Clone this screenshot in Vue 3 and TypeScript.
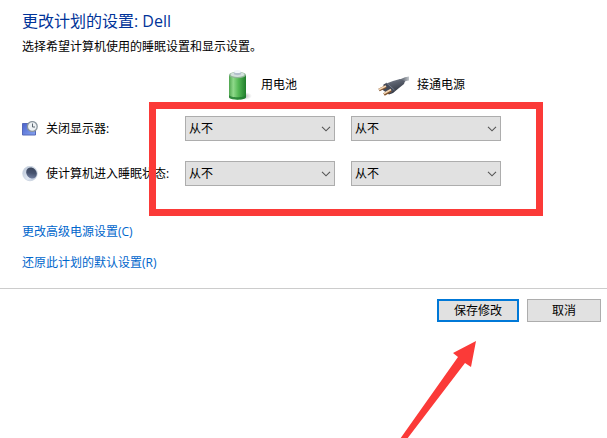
<script setup lang="ts">
import { ref } from 'vue'

interface PowerSetting {
  id: string
  label: string
}

const settings: PowerSetting[] = [
  { id: 'display', label: '关闭显示器:' },
  { id: 'sleep', label: '使计算机进入睡眠状态:' },
]
const sources = ['battery', 'mains']
const options = ['1 分钟', '5 分钟', '15 分钟', '从不']

const chosen = ref<Record<string, string>>({
  'display-battery': '从不',
  'display-mains': '从不',
  'sleep-battery': '从不',
  'sleep-mains': '从不',
})
</script>

<template>
  <main class="page">
    <section class="content">
      <h1 class="title">更改计划的设置: Dell</h1>
      <p class="intro">选择希望计算机使用的睡眠设置和显示设置。</p>

      <div class="settings">
        <div class="source source-battery">
          <svg class="source-icon" viewBox="0 0 32 32" aria-hidden="true">
            <defs>
              <linearGradient id="cell" x1="0" x2="1" y1="0" y2="0">
                <stop offset="0" stop-color="#4fa54f" />
                <stop offset="0.25" stop-color="#8fd98a" />
                <stop offset="0.55" stop-color="#55b956" />
                <stop offset="1" stop-color="#1f7d2b" />
              </linearGradient>
              <radialGradient id="shade">
                <stop offset="0" stop-color="#777" stop-opacity="0.6" />
                <stop offset="1" stop-color="#999" stop-opacity="0" />
              </radialGradient>
            </defs>
            <ellipse cx="23" cy="27" rx="8" ry="4" fill="url(#shade)" />
            <path d="M8 6v22c0 3.500 17 3.500 17 0V6z" fill="url(#cell)" />
            <path d="M8 26c1 3 16 3 17 0v2c0 3.500-17 3.500-17 0z" fill="#1f7a2f" fill-opacity="0.8" />
            <ellipse cx="16.500" cy="6" rx="8.500" ry="3.200" fill="#8fb596" />
            <ellipse cx="16.500" cy="5.500" rx="7" ry="2.500" fill="#d3e0dc" />
            <path d="M13 2.500v2.500c0 1.500 7 1.500 7 0V2.500z" fill="#b3bfcc" />
            <ellipse cx="16.500" cy="2.500" rx="3.500" ry="1.500" fill="#f2f6fa" />
          </svg>
          <span>用电池</span>
        </div>
        <div class="source source-mains">
          <svg class="source-icon" viewBox="0 0 32 32" aria-hidden="true">
            <defs>
              <linearGradient id="plug" x1="0" x2="0.4" y1="0" y2="1">
                <stop offset="0" stop-color="#8d939f" />
                <stop offset="0.4" stop-color="#5b616e" />
                <stop offset="1" stop-color="#2e333e" />
              </linearGradient>
              <linearGradient id="cord" gradientUnits="userSpaceOnUse" x1="20" x2="32" y1="0" y2="0">
                <stop offset="0" stop-color="#4c525e" />
                <stop offset="0.6" stop-color="#7e848d" />
                <stop offset="1" stop-color="#c4c8cd" />
              </linearGradient>
            </defs>
            <path d="M20 14c5-1 6-4.500 12-4.500" fill="none" stroke="url(#cord)" stroke-width="4" />
            <path d="M8 15l8-3 7-2 5 2-1 3-5 4-6 5-4 1.500-7-5z" fill="url(#plug)" />
            <path d="M6.500 15.500l3-1.500 8 7-4 4c-4-1-8-4-7-9.500z" fill="#454b59" />
            <path d="M9.500 14l8 7" stroke="#7f8695" stroke-width="0.800" />
            <path d="M9 17.500l-7 3.500M14 21.500l-7 4" stroke="#85562d" stroke-width="3" />
            <path d="M9 17l-7 3.500M14 20.500l-7 4" stroke="#f2d5b4" stroke-width="1.800" />
          </svg>
          <span>接通电源</span>
        </div>

        <template v-for="setting in settings" :key="setting.id">
          <div class="setting-name">
            <svg v-if="setting.id === 'display'" class="row-icon" viewBox="0 0 16 16" aria-hidden="true">
              <defs>
                <linearGradient id="screen" x1="0" x2="1" y1="0" y2="1">
                  <stop offset="0" stop-color="#4a62cc" />
                  <stop offset="1" stop-color="#86a4f0" />
                </linearGradient>
              </defs>
              <path d="M.5 2.500h13v11.500H.5z" fill="url(#screen)" stroke="#5568b8" />
              <circle cx="10.300" cy="5.500" r="4.900" fill="#edf1f4" stroke="#8b969e" stroke-width="1.300" />
              <path d="M10.500 2.500v3.500h2.500" fill="none" stroke="#5c6872" />
            </svg>
            <svg v-else class="row-icon" viewBox="0 0 16 16" aria-hidden="true">
              <defs>
                <linearGradient id="moon" x1="0" x2="1" y1="0" y2="1">
                  <stop offset="0" stop-color="#b8c3d4" />
                  <stop offset="0.6" stop-color="#dfe7f2" />
                  <stop offset="1" stop-color="#aab6cf" />
                </linearGradient>
                <linearGradient id="night" x1="0" x2="1" y1="0" y2="1">
                  <stop offset="0" stop-color="#3a4358" />
                  <stop offset="0.5" stop-color="#46536f" />
                  <stop offset="1" stop-color="#8592b4" />
                </linearGradient>
              </defs>
              <circle cx="8" cy="7.500" r="7.300" fill="url(#moon)" stroke="#c6d0dc" stroke-width="0.700" />
              <ellipse cx="9.500" cy="7" rx="5.800" ry="5" transform="rotate(50 9.500 7)" fill="url(#night)" />
            </svg>
            <label :for="`${setting.id}-battery`">{{ setting.label }}</label>
          </div>
          <div v-for="source in sources" :key="source" class="picker">
            <select
              :id="`${setting.id}-${source}`"
              v-model="chosen[`${setting.id}-${source}`]"
              :aria-label="setting.label"
            >
              <option v-for="option in options" :key="option">{{ option }}</option>
            </select>
            <svg class="chevron" viewBox="0 0 10 6" aria-hidden="true">
              <path d="M1 .8l4 4 4-4" fill="none" stroke="#555" stroke-width="1.100" />
            </svg>
          </div>
        </template>
        <div class="highlight"></div>
      </div>

      <nav class="links">
        <a href="#advanced">更改高级电源设置(C)</a>
        <a href="#restore">还原此计划的默认设置(R)</a>
      </nav>
    </section>

    <footer class="actions">
      <button type="button" class="button primary">保存修改</button>
      <button type="button" class="button">取消</button>
      <svg class="arrow" viewBox="0 0 76 98" aria-hidden="true">
        <path d="M76 0L53 12l5 4L0 98h7L65 22l6 4z" fill="#fb3a38" />
      </svg>
    </footer>
  </main>
</template>

<style>
body {
  margin: 0;
  background: #fff;
}
</style>

<style scoped>
.page {
  font-family: "Open Sans", "Noto Sans CJK SC", sans-serif;
  font-size: 12px;
  line-height: 16px;
  color: #000;
}

.content {
  padding: 10px 22px 17px;
}

.title {
  margin: 0;
  font-size: 16px;
  font-weight: 400;
  line-height: 22px;
  color: #003399;
}

.intro {
  margin: 7px 0 14px;
}

.settings {
  position: relative;
  display: grid;
  grid-template-columns: 147px 150px 150px;
  column-gap: 16px;
  row-gap: 20px;
  white-space: nowrap;
}

.source {
  display: flex;
  align-items: center;
  gap: 8px;
  height: 32px;
  margin-bottom: -5px;
}

.source-battery {
  grid-column: 2;
  padding-left: 36px;
}

.source-mains {
  padding-left: 26px;
}

.source-icon {
  flex: none;
  width: 32px;
  height: 32px;
}

.setting-name {
  display: flex;
  align-items: center;
  gap: 8px;
}

.row-icon {
  flex: none;
  width: 16px;
  height: 16px;
}

.picker {
  display: grid;
  align-items: center;
}

.picker > * {
  grid-area: 1 / 1;
}

select {
  appearance: none;
  box-sizing: border-box;
  width: 100%;
  height: 25px;
  margin: 0;
  padding: 0 24px 0 3px;
  border: 1px solid #adadad;
  border-radius: 0;
  background: #e1e1e1;
  color: #000;
  font: inherit;
}

.chevron {
  justify-self: end;
  width: 10px;
  height: 6px;
  margin-right: 4px;
  pointer-events: none;
}

.highlight {
  position: absolute;
  top: 33px;
  left: 127px;
  box-sizing: border-box;
  width: 394px;
  height: 114px;
  border: 7px solid #fb3a38;
  pointer-events: none;
}

.links {
  display: flex;
  flex-direction: column;
  align-items: flex-start;
  gap: 15px;
  margin-top: 38px;
}

.links a {
  color: #0066cc;
  text-decoration: none;
}

.actions {
  position: relative;
  display: flex;
  justify-content: flex-end;
  gap: 8px;
  padding: 10px 6px 116px;
  border-top: 1px solid #ccc;
}

.button {
  box-sizing: border-box;
  min-width: 74px;
  height: 23px;
  padding: 0 15px;
  border: 1px solid #adadad;
  background: #e1e1e1;
  color: #000;
  font: inherit;
}

.primary {
  min-width: 82px;
  border: 2px solid #0078d7;
}

.arrow {
  position: absolute;
  top: 52px;
  right: 131px;
  width: 76px;
  height: 98px;
}
</style>
